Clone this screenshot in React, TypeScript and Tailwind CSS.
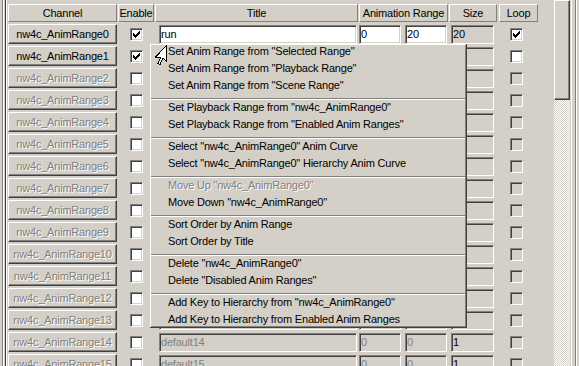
import React from 'react';

const RAISED =
  'border border-t-white border-l-white border-r-[#404040] border-b-[#404040] shadow-[inset_-1px_-1px_0_#808080]';
const HEADER = 'border border-t-white border-l-white border-r-[#808080] border-b-[#808080]';
const SUNKEN =
  'border border-t-[#808080] border-l-[#808080] border-r-white border-b-white shadow-[inset_1px_1px_0_#404040,inset_-1px_-1px_0_#d4d0c8]';
const GREY_TEXT = 'text-[#808080] [text-shadow:1px_1px_0_#fff]';

// rows 1..13 sit under the context menu, so their fields stay empty
const ROWS = Array.from({ length: 16 }, (_, i) => {
  const hidden = i > 0 && i < 14;
  return {
    name: `nw4c_AnimRange${i}`,
    enabled: i < 2,
    title: hidden ? '' : i === 0 ? 'run' : `default${i}`,
    start: hidden ? '' : '0',
    end: hidden ? '' : i === 0 ? '20' : '0',
    size: hidden ? '' : i === 0 ? '20' : '1',
    loop: i === 0,
  };
});

const MENU: { label: string; disabled?: boolean }[][] = [
  [
    { label: 'Set Anim Range from "Selected Range"' },
    { label: 'Set Anim Range from "Playback Range"' },
    { label: 'Set Anim Range from "Scene Range"' },
  ],
  [
    { label: 'Set Playback Range from "nw4c_AnimRange0"' },
    { label: 'Set Playback Range from "Enabled Anim Ranges"' },
  ],
  [
    { label: 'Select "nw4c_AnimRange0" Anim Curve' },
    { label: 'Select "nw4c_AnimRange0" Hierarchy Anim Curve' },
  ],
  [
    { label: 'Move Up "nw4c_AnimRange0"', disabled: true },
    { label: 'Move Down "nw4c_AnimRange0"' },
  ],
  [{ label: 'Sort Order by Anim Range' }, { label: 'Sort Order by Title' }],
  [{ label: 'Delete "nw4c_AnimRange0"' }, { label: 'Delete "Disabled Anim Ranges"' }],
  [
    { label: 'Add Key to Hierarchy from "nw4c_AnimRange0"' },
    { label: 'Add Key to Hierarchy from Enabled Anim Ranges' },
  ],
];

function CheckBox({ checked, disabled }: { checked?: boolean; disabled?: boolean }) {
  return (
    <div
      className={`w-[13px] h-[13px] flex items-center justify-center ${SUNKEN} ${
        disabled ? 'bg-[#d4d0c8]' : 'bg-white'
      }`}
    >
      {checked && (
        <svg width="7" height="7" viewBox="0 0 7 7" shapeRendering="crispEdges">
          <rect x="6" y="0" width="1" height="1" />
          <rect x="5" y="1" width="2" height="1" />
          <rect x="0" y="2" width="1" height="1" />
          <rect x="4" y="2" width="3" height="1" />
          <rect x="0" y="3" width="2" height="1" />
          <rect x="3" y="3" width="3" height="1" />
          <rect x="0" y="4" width="5" height="1" />
          <rect x="1" y="5" width="3" height="1" />
          <rect x="2" y="6" width="1" height="1" />
        </svg>
      )}
    </div>
  );
}

function Field({
  value,
  className,
  grey,
  dim,
}: {
  value: string;
  className: string;
  grey?: boolean;
  dim?: boolean;
}) {
  return (
    <div
      className={`h-[19px] flex items-center pl-[1px] overflow-hidden whitespace-nowrap ${SUNKEN} ${className} ${
        grey ? 'bg-[#d4d0c8]' : 'bg-white'
      } ${dim ? 'text-[#808080]' : 'text-black'}`}
    >
      {value}
    </div>
  );
}

function Cursor() {
  return (
    <svg
      className="absolute left-[155px] top-[45px]"
      width="13"
      height="21"
      viewBox="0 0 13 21"
      shapeRendering="crispEdges"
    >
      <path
        d="M11.5 0.5 L11.5 16.5 L8 13 L5 19.5 L3 18.5 L6 12 L0.5 12 Z"
        fill="white"
        stroke="black"
        strokeWidth="1"
      />
    </svg>
  );
}

function ContextMenu() {
  return (
    <div className="absolute left-[150px] top-[44px] w-[317px] h-[284px] overflow-hidden bg-[#d4d0c8] border-r border-b border-r-[#404040] border-b-[#404040] shadow-[inset_1px_1px_0_#fff,inset_-1px_-1px_0_#808080]">
      {MENU.map((group, g) => (
        <div key={g}>
          {g > 0 && (
            <div className="h-[5px] pt-[3px] px-px">
              <div className="h-px bg-[#808080]" />
              <div className="h-px bg-white" />
            </div>
          )}
          {group.map(item => (
            <div
              key={item.label}
              className={`h-[17px] pb-[2px] pl-[18px] flex items-center whitespace-nowrap ${
                item.disabled ? GREY_TEXT : 'text-black'
              }`}
            >
              {item.label}
            </div>
          ))}
        </div>
      ))}
    </div>
  );
}

export default function App() {
  return (
    <div className="relative w-[579px] h-[366px] overflow-hidden bg-[#d4d0c8] flex font-['Liberation_Sans',Arial,sans-serif] text-[11px] tracking-[-0.2px] leading-none select-none">
      {/* left frame */}
      <div className="flex w-[8px] shrink-0 pl-[2px]">
        <div className="w-px bg-[#808080]" />
        <div className="w-px bg-white" />
        <div className="w-px" />
        <div className="w-px bg-[#404040]" />
        <div className="w-px bg-white" />
      </div>

      {/* table */}
      <div className="flex flex-col w-[546px] shrink-0">
        <div className="flex h-[23px] pt-[4px] pb-px shrink-0">
          <div className="w-[110px]">
            <div className={`w-[109px] h-full flex items-center justify-center ${HEADER}`}>Channel</div>
          </div>
          <div className="w-[37px]">
            <div className={`w-[36px] h-full flex items-center justify-center ${HEADER}`}>Enable</div>
          </div>
          <div className="w-[204px]">
            <div className={`w-[203px] h-full flex items-center justify-center ${HEADER}`}>Title</div>
          </div>
          <div className="w-[90px]">
            <div className={`w-[89px] h-full flex items-center justify-center ${HEADER}`}>Animation Range</div>
          </div>
          <div className="w-[50px]">
            <div className={`w-[48px] h-full flex items-center justify-center ${HEADER}`}>Size</div>
          </div>
          <div className="w-[39px]">
            <div className={`w-[39px] h-full flex items-center justify-center ${HEADER}`}>Loop</div>
          </div>
        </div>

        {ROWS.map(row => (
          <div key={row.name} className="flex h-[22px] shrink-0">
            <div className="w-[110px] pt-px">
              <div
                className={`w-[109px] h-[20px] flex items-center justify-center ${RAISED} ${
                  row.enabled ? 'text-black' : GREY_TEXT
                }`}
              >
                {row.name}
              </div>
            </div>
            <div className="w-[37px] pl-[12px] pt-[5px]">
              <CheckBox checked={row.enabled} />
            </div>
            <div className="w-[204px] pl-[4px] pt-[2px]">
              <Field value={row.title} className="w-[198px]" grey={!row.enabled} dim={!row.enabled} />
            </div>
            <div className="w-[90px] pt-[2px] flex gap-[4px]">
              <Field value={row.start} className="w-[42px]" grey={!row.enabled} dim={!row.enabled} />
              <Field value={row.end} className="w-[42px]" grey={!row.enabled} dim={!row.enabled} />
            </div>
            <div className="w-[50px] pl-[2px] pt-[2px]">
              <Field value={row.size} className="w-[43px]" grey />
            </div>
            <div className="w-[39px] pl-[11px] pt-[5px]">
              <CheckBox checked={row.loop} disabled={!row.enabled} />
            </div>
          </div>
        ))}
      </div>

      {/* scrollbar */}
      <div className="flex flex-col w-[16px] shrink-0">
        <div className={`h-[100px] shrink-0 bg-[#d4d0c8] ${RAISED}`} />
        <div className="flex-1 bg-[repeating-conic-gradient(#fff_0_25%,#d4d0c8_0_50%)] bg-[length:2px_2px]" />
      </div>

      {/* right frame */}
      <div className="flex w-[9px] shrink-0">
        <div className="w-px" />
        <div className="w-px bg-white" />
        <div className="w-[3px]" />
        <div className="w-px bg-[#808080]" />
        <div className="w-px bg-white" />
      </div>

      <ContextMenu />
      <Cursor />
    </div>
  );
}
